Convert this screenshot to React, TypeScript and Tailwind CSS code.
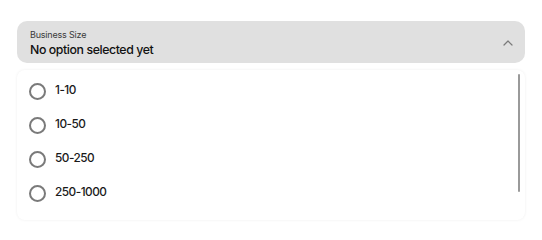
import React from "react";

const options = ["1-10", "10-50", "50-250", "250-1000"];

export default function App() {
  return (
    <div
      className="w-[542px] h-[233px] bg-white px-[17px] pt-[21px]"
      style={{ fontFamily: "Inter, 'Noto Sans', sans-serif" }}
    >
      <div className="h-[42px] w-[508px] rounded-[10px] bg-[#e0e0e0] pl-[13px] pr-[11px] flex items-center justify-between">
        <div className="flex flex-col pt-[2px]">
          <span className="text-[9px] leading-[11px] tracking-[-0.2px] text-[#3a3a3a]">Business Size</span>
          <span className="mt-[2px] text-[12.3px] leading-[15px] font-medium tracking-[-0.4px] text-[#111]">No option selected yet</span>
        </div>
        <svg width="12" height="8" viewBox="0 0 12 8" className="mt-[2px]">
          <path d="M2 6 L6 2 L10 6" fill="none" stroke="#7a7a7a" strokeWidth="1.2" strokeLinecap="round" strokeLinejoin="round" />
        </svg>
      </div>
      <div className="relative mt-[7px] h-[150px] w-[508px] rounded-[8px] bg-white shadow-[0_0_3px_rgba(0,0,0,0.07)] pt-[4px]">
        {options.map((o) => (
          <div key={o} className="h-[34px] flex items-center pl-[12px] gap-[9px]">
            <span className="w-[17px] h-[17px] rounded-full border-2 border-[#7a7a7a] box-border" />
            <span className="text-[11.8px] font-medium tracking-[-0.5px] text-[#1a1a1a]">{o}</span>
          </div>
        ))}
        <div className="absolute right-[5px] top-[4px] w-[2px] h-[118px] bg-[#9a9a9a] rounded-full" />
      </div>
    </div>
  );
}
